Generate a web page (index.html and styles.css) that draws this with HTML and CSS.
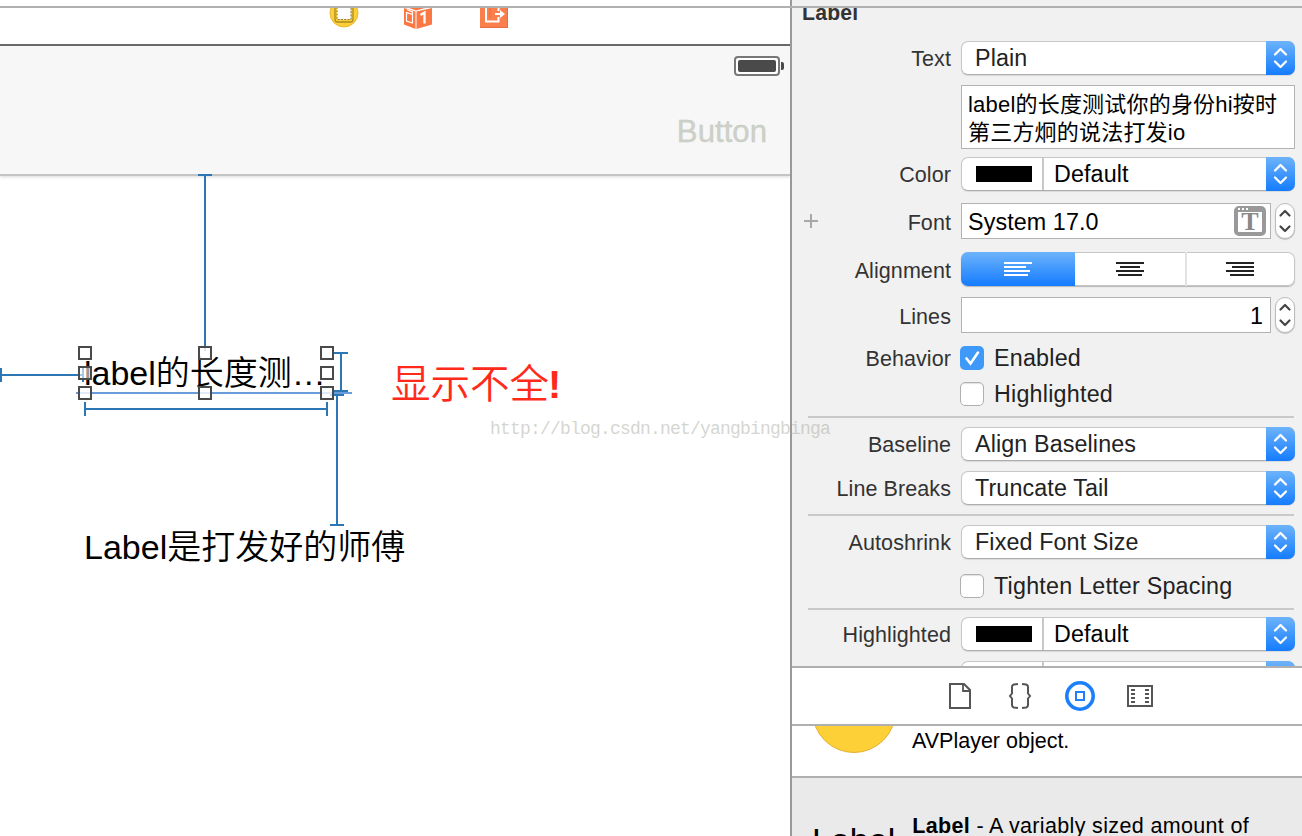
FILE: index.html
```
<!DOCTYPE html>
<html lang="zh-CN">

<head>
    <meta charset="UTF-8">
    <meta name="viewport" content="width=device-width, initial-scale=1.0">
    <title>Label</title>
    <link rel="stylesheet" href="styles.css">
</head>

<body>
    <!-- shared symbols -->
    <svg class="defs">
        <symbol id="updown" viewBox="0 0 29 34">
            <path d="M9 13.500l5.500-5.500 5.500 5.500M9 20.500l5.500 5.500 5.500-5.500" fill="none" stroke="#fff" stroke-width="2.300" stroke-linecap="round" stroke-linejoin="round" />
        </symbol>
        <symbol id="stepper" viewBox="0 0 20 36">
            <path d="M5.500 12.500l4.500-4.500 4.500 4.500M5.500 23.500l4.500 4.500 4.500-4.500" fill="none" stroke="#444" stroke-width="2.200" stroke-linecap="round" stroke-linejoin="round" />
        </symbol>
    </svg>

    <div class="topbar"></div>

    <div class="container">
        <!-- Interface Builder canvas -->
        <div class="editor">
            <div class="dock">
                <svg width="30" height="20" viewBox="0 8 30 20">
                    <circle cx="15" cy="13" r="14" fill="#fdd037" stroke="#e9b637" />
                    <rect x="6" y="2" width="18" height="20" rx="2.500" fill="#fdd037" stroke="#a98a26" stroke-width="1.300" />
                    <rect x="8" y="2" width="14" height="17.500" fill="#fff" stroke="#8b7428" stroke-dasharray="2 1.300" />
                </svg>
                <svg width="28" height="21" viewBox="0 8 28 21">
                    <path d="M0 8l11.500 3.500V29L0 24.500z" fill="#fb7744" />
                    <path d="M12.500 11.500L28 8v16.500L12.500 29z" fill="#fb7744" />
                    <path d="M5 8h16l-9 2.500z" fill="#fb7744" />
                    <path d="M2.500 12.500l6 2v8.500l-6-2zM3 9.500l5.500 2.500v2" fill="none" stroke="#fff" stroke-width="1.200" />
                    <path d="M16.500 15l4-2.500V23.500" fill="none" stroke="#fff" stroke-width="2.300" />
                </svg>
                <svg width="28" height="20" viewBox="0 8 28 20">
                    <rect width="28" height="28" fill="#fb7f4d" />
                    <path d="M27.500 0v27.500H0" fill="none" stroke="#e76e42" />
                    <path d="M6 8v13.500h12.500v-4.500M18.500 8v3" fill="none" stroke="#fff" stroke-width="2" />
                    <path d="M10 8v10" stroke="#e76e42" />
                    <path d="M15 14h8" stroke="#fff" stroke-width="2" />
                    <path d="M20 10l5 4-5 4z" fill="#fff" />
                </svg>
            </div>

            <div class="navbar">
                <div class="battery"><span></span></div>
                <div class="nav-button">Button</div>
            </div>

            <div class="ui-label selected-label">label的长度测…</div>
            <div class="ui-label second-label">Label是打发好的师傅</div>
            <svg class="constraints" width="790" height="836" viewBox="0 0 790 836">
                <g fill="none" stroke="#2d76b5" stroke-width="2">
                    <path d="M198 175h14M205 175v176" />
                    <path d="M1 368v14M1 375h82M83 367v15" />
                    <path d="M334 353h14M341 353v38M334 391h14" />
                    <path d="M85 402v14M327 402v14M85 409h242" />
                    <path d="M330 395h14M337 395v130M330 525h14" />
                </g>
                <path d="M76 393h276" stroke="#699cda" stroke-width="2" />
                <g fill="#fff" fill-opacity=".8" stroke="#4a4a4a" stroke-width="2">
                    <rect x="79" y="347" width="12" height="12" />
                    <rect x="199" y="347" width="12" height="12" />
                    <rect x="321" y="347" width="12" height="12" />
                    <rect x="79" y="367" width="12" height="12" fill-opacity=".6" />
                    <rect x="321" y="367" width="12" height="12" />
                    <rect x="79" y="387" width="12" height="12" />
                    <rect x="199" y="387" width="12" height="12" />
                    <rect x="321" y="387" width="12" height="12" />
                </g>
            </svg>
            <div class="note">显示不全<b>!</b></div>
        </div>

        <div class="sidebar">
            <!-- attributes inspector -->
            <div class="inspector">
                <h2>Label</h2>

                <div class="row">
                    <div class="name">Text</div>
                    <div class="popup"><span>Plain</span><i><svg><use href="#updown" /></svg></i></div>
                </div>
                <div class="row gap-10">
                    <div class="name"></div>
                    <div class="textarea">label的长度测试你的身份hi按时<br>第三方炯的说法打发io</div>
                </div>
                <div class="row gap-8">
                    <div class="name">Color</div>
                    <div class="popup color"><b></b><span>Default</span><i><svg><use href="#updown" /></svg></i></div>
                </div>
                <div class="row gap-12">
                    <div class="name low with-plus">
                        <svg width="14" height="14"><path d="M7 0v14M0 7h14" stroke="#a8a8a8" stroke-width="2" /></svg>
                        Font
                    </div>
                    <div class="field-group">
                        <div class="field">
                            System 17.0
                            <span class="font-icon">T</span>
                        </div>
                        <div class="stepper"><svg><use href="#stepper" /></svg></div>
                    </div>
                </div>
                <div class="row gap-13">
                    <div class="name low">Alignment</div>
                    <div class="segments">
                        <div class="active"><svg width="28" height="14"><path d="M0 1h28M0 5h22M0 9h26M0 13h24" /></svg></div>
                        <div><svg width="28" height="14"><path d="M0 1h28M4 5h20M0 9h28M2 13h24" /></svg></div>
                        <div><svg width="28" height="14"><path d="M0 1h28M6 5h22M0 9h28M4 13h24" /></svg></div>
                    </div>
                </div>
                <div class="row gap-11">
                    <div class="name low">Lines</div>
                    <div class="field-group">
                        <div class="field number">1</div>
                        <div class="stepper"><svg><use href="#stepper" /></svg></div>
                    </div>
                </div>
                <div class="row gap-13">
                    <div class="name">Behavior</div>
                    <div class="check checked">
                        <i><svg width="24" height="24"><path d="M6.500 12.500l4 5 7.500-11" fill="none" stroke="#fff" stroke-width="2.600" stroke-linecap="round" /></svg></i>
                        Enabled
                    </div>
                </div>
                <div class="row gap-12">
                    <div class="name"></div>
                    <div class="check"><i></i>Highlighted</div>
                </div>

                <div class="divider gap-10"></div>

                <div class="row gap-9">
                    <div class="name">Baseline</div>
                    <div class="popup"><span>Align Baselines</span><i><svg><use href="#updown" /></svg></i></div>
                </div>
                <div class="row gap-10">
                    <div class="name">Line Breaks</div>
                    <div class="popup"><span>Truncate Tail</span><i><svg><use href="#updown" /></svg></i></div>
                </div>

                <div class="divider gap-9"></div>

                <div class="row gap-9">
                    <div class="name">Autoshrink</div>
                    <div class="popup"><span>Fixed Font Size</span><i><svg><use href="#updown" /></svg></i></div>
                </div>
                <div class="row gap-15">
                    <div class="name"></div>
                    <div class="check"><i></i>Tighten Letter Spacing</div>
                </div>

                <div class="divider gap-10"></div>

                <div class="row gap-7">
                    <div class="name">Highlighted</div>
                    <div class="popup color"><b></b><span>Default</span><i><svg><use href="#updown" /></svg></i></div>
                </div>
                <div class="row gap-10">
                    <div class="name"></div>
                    <div class="popup color"><b></b><span></span><i></i></div>
                </div>
            </div>

            <!-- library tabs -->
            <div class="tabs">
                <svg width="30" height="30" viewBox="0 0 30 30" fill="none" stroke="#555" stroke-width="2">
                    <path d="M5 3h14l6 6v18H5z" />
                    <path d="M18 4v6h6" stroke-width="1.800" />
                </svg>
                <svg width="30" height="30" viewBox="0 0 30 30" fill="none" stroke="#555" stroke-width="2">
                    <path d="M13 3l-4 .5q-2 .5-2 2.500v6.500L5 15l2 2.500V24q0 2 2 2.500l4 .5M17 3l4 .5q2 .5 2 2.500v6.500l2 2.500-2 2.500V24q0 2-2 2.500l-4 .5" />
                </svg>
                <svg width="30" height="30" viewBox="0 0 30 30" fill="none" stroke="#1d80fb">
                    <circle cx="15" cy="15" r="13.200" stroke-width="3.600" />
                    <path d="M11 11h8v8h-8z" stroke-width="2" />
                </svg>
                <svg width="30" height="30" viewBox="0 0 30 30" fill="none" stroke="#555" stroke-width="2">
                    <path d="M3 5h24v20H3z" />
                    <path d="M6 9h4M6 13h4M6 17h4M6 21h4M20 9h4M20 13h4M20 17h4M20 21h4" />
                </svg>
            </div>

            <!-- object library -->
            <div class="library-item player">
                <div class="circle"></div>
                <p>AVPlayer object.</p>
            </div>
            <div class="library-item selected">
                <div class="preview">Label</div>
                <p><strong>Label</strong> - A variably sized amount of</p>
            </div>
        </div>
    </div>

    <div class="watermark">http://blog.csdn.net/yangbingbinga</div>
</body>

</html>
```
FILE: styles.css
```
:root {
    --panel-color: #f1f1f1;
    --line-color: #b0b0b0;
    --blue-gradient: linear-gradient(#6db3fa, #147cff);
}

* {
    box-sizing: border-box;
}

body {
    margin: 0;
    width: 1302px;
    height: 836px;
    position: relative;
    overflow: hidden;
    background: #fff;
    color: #000;
    font-family: "Liberation Sans", "Noto Sans CJK SC", sans-serif;
}

svg {
    display: block;
    flex: none;
}

.defs {
    position: absolute;
    width: 0;
    height: 0;
}

/* the line across the window top, over both panes */
.topbar {
    position: absolute;
    top: 6px;
    left: 0;
    width: 100%;
    height: 2px;
    background: var(--line-color);
    z-index: 1;
}

.container {
    display: flex;
    height: 836px;
}

/* Canvas */
.editor {
    position: relative;
    width: 790px;
    flex: none;
    overflow: hidden;
}

.dock {
    display: flex;
    gap: 46px;
    height: 46px;
    padding: 8px 0 0 329px;
    border-bottom: 2px solid #6b6b6b;
}

.dock svg + svg {
    margin-left: -1px;
}

.dock svg:last-child {
    margin-left: 2px;
}

.navbar {
    display: flex;
    flex-direction: column;
    align-items: flex-end;
    height: 130px;
    background: #f7f7f7;
    border-bottom: 2px solid #c4c4c4;
    box-shadow: 0 1px 3px rgba(0, 0, 0, 0.15);
}

.battery {
    position: relative;
    width: 46px;
    height: 20px;
    margin: 10px 10px 0 0;
    padding: 2px;
    border: 2px solid #777;
    border-radius: 4px;
    background: #fff;
}

.battery span {
    display: block;
    height: 12px;
    border-radius: 2px;
    background: #4a4a4a;
}

.battery::after {
    content: "";
    position: absolute;
    left: 45px;
    top: 4px;
    width: 3px;
    height: 8px;
    border-radius: 0 2px 2px 0;
    background: #4a4a4a;
}

.nav-button {
    margin: 37px 23px 0 0;
    font-size: 31.200px;
    line-height: 37px;
    color: #cdd1c7;
    -webkit-text-stroke: 0.300px #c4c7c0;
}

.ui-label {
    position: absolute;
    left: 84px;
    font-size: 34px;
    font-weight: 350;
    line-height: 40px;
    white-space: nowrap;
}

.selected-label {
    top: 353px;
}

.second-label {
    top: 527px;
}

.constraints {
    position: absolute;
    top: 0;
    left: 0;
}

.note {
    position: absolute;
    left: 391px;
    top: 357px;
    font-family: "Noto Sans CJK SC", sans-serif;
    font-size: 39.500px;
    font-weight: 350;
    line-height: 48px;
    color: #ff2a1a;
}

.note b {
    margin-left: -1px;
    font-family: "Liberation Sans", sans-serif;
}

.watermark {
    position: absolute;
    left: 490px;
    top: 419px;
    font-family: "Liberation Mono", monospace;
    font-size: 18px;
    line-height: 20px;
    letter-spacing: -0.800px;
    color: rgba(170, 172, 160, 0.5);
}

/* Right pane */
.sidebar {
    display: flex;
    flex-direction: column;
    width: 512px;
    border-left: 2px solid #999;
}

.inspector {
    height: 668px;
    flex: none;
    padding-top: 8px;
    overflow: hidden;
    background: var(--panel-color);
    border-bottom: 2px solid var(--line-color);
}

/* scrolled half out of view */
.inspector h2 {
    margin: 0;
    padding-left: 10px;
    height: 33px;
    overflow: hidden;
    font-size: 21.200px;
    line-height: 10px;
    letter-spacing: 0.200px;
    color: #333;
}

.row {
    display: grid;
    grid-template-columns: 159px 334px;
    column-gap: 10px;
    align-items: center;
}

.gap-7 { margin-top: 7px; }
.gap-8 { margin-top: 8px; }
.gap-9 { margin-top: 9px; }
.gap-10 { margin-top: 10px; }
.gap-11 { margin-top: 11px; }
.gap-12 { margin-top: 12px; }
.gap-13 { margin-top: 13px; }
.gap-15 { margin-top: 15px; }

.name {
    padding-top: 2px;
    text-align: right;
    font-size: 21.500px;
    line-height: 22px;
    letter-spacing: 0.080px;
    color: #333;
}

.low {
    padding-top: 4px;
}

.with-plus {
    display: flex;
    justify-content: space-between;
    align-items: center;
    padding-left: 12px;
}

.with-plus svg {
    margin-top: -4px;
}

.popup {
    display: flex;
    align-items: center;
    height: 34px;
    background: #fff;
    border: 1px solid #c6c6c6;
    border-bottom-color: #adadad;
    border-radius: 7px;
    box-shadow: 0 1px 1px rgba(0, 0, 0, 0.1);
    font-size: 23.300px;
    letter-spacing: 0.120px;
    color: #222;
}

.popup span {
    flex: 1;
    padding-left: 13px;
}

.popup i {
    width: 29px;
    height: 34px;
    margin: -1px;
    border-radius: 0 7px 7px 0;
    background: var(--blue-gradient);
}

.popup svg {
    width: 29px;
    height: 34px;
}

.popup b {
    width: 56px;
    height: 16px;
    margin: 0 10px 0 14px;
    background: #000;
}

.popup.color {
    color: #000;
}

.color span {
    height: 32px;
    padding-left: 10px;
    line-height: 33px;
    border-left: 2px solid #c9c9c9;
}

.textarea {
    height: 64px;
    padding: 5px 0 0 6px;
    background: #fff;
    border: 1px solid #b3b3b3;
    font-size: 22px;
    line-height: 28px;
    letter-spacing: 0.200px;
    white-space: nowrap;
}

.field-group {
    display: flex;
    justify-content: space-between;
}

.field {
    display: flex;
    align-items: center;
    justify-content: space-between;
    width: 310px;
    height: 36px;
    padding: 2px 4px 0 6px;
    background: #fff;
    border: 1px solid #b3b3b3;
    font-size: 23.300px;
    letter-spacing: 0.100px;
}

.number {
    justify-content: flex-end;
    padding-right: 7px;
}

.font-icon {
    width: 32px;
    height: 30px;
    margin-top: -2px;
    border: 4px solid #999;
    border-top-width: 6px;
    border-radius: 5px;
    text-align: center;
    font-family: "Liberation Serif", serif;
    font-size: 26px;
    font-weight: bold;
    line-height: 20px;
    letter-spacing: 0;
    color: #888;
    position: relative;
}

/* window dots on the title strip of the font icon */
.font-icon::before {
    content: "";
    position: absolute;
    left: 0;
    top: -4px;
    width: 10px;
    height: 2px;
    background: repeating-linear-gradient(90deg, #fff 0 2px, #999 2px 4px);
}

.stepper {
    width: 20px;
    height: 36px;
    border: 1px solid #bbb;
    border-radius: 10px;
    background: #fff;
    box-shadow: 0 1px 1px rgba(0, 0, 0, 0.2);
}

.stepper svg {
    width: 20px;
    height: 36px;
    margin: -1px;
}

.segments {
    display: grid;
    grid-template-columns: 114px 110px 110px;
    height: 34px;
    border-radius: 7px;
    background: #fff;
    overflow: hidden;
    box-shadow: inset 0 0 0 1px #c6c6c6, 0 1px 1px rgba(0, 0, 0, 0.25);
}

.segments div {
    display: flex;
    align-items: center;
    justify-content: center;
}

.segments div + div + div {
    padding-right: 2px;
    border-left: 2px solid #e2e2e2;
}

.segments .active {
    padding-right: 1px;
    background: var(--blue-gradient);
}

.segments path {
    stroke: #222;
    stroke-width: 2;
}

.segments .active path {
    stroke: #fff;
}

.check {
    display: flex;
    align-items: center;
    gap: 10px;
    height: 24px;
    margin-left: -1px;
    font-size: 23.300px;
    letter-spacing: 0.220px;
    color: #222;
    white-space: nowrap;
}

.check i {
    width: 24px;
    height: 24px;
    background: #fff;
    border: 1px solid #b0b0b0;
    border-radius: 5px;
    box-shadow: inset 0 1px 1px rgba(0, 0, 0, 0.12);
}

.checked i {
    background: #3f99f8;
    border: none;
    box-shadow: none;
}

.divider {
    height: 2px;
    margin-left: 16px;
    margin-right: 8px;
    background: #c9c9c9;
}

/* Library */
.tabs {
    display: flex;
    justify-content: center;
    align-items: center;
    gap: 30px;
    height: 58px;
    flex: none;
    padding-left: 6px;
    border-bottom: 2px solid var(--line-color);
    background: #fff;
}

.library-item {
    display: flex;
    flex: none;
    overflow: hidden;
    font-size: 21.500px;
    line-height: 24px;
    white-space: nowrap;
}

.library-item p {
    margin: 0;
}

.player {
    align-items: flex-end;
    gap: 16px;
    height: 52px;
    padding: 0 0 23px 20px;
    border-bottom: 2px solid var(--line-color);
    background: #fff;
}

.circle {
    width: 84px;
    height: 84px;
    flex: none;
    border: 1px solid #e6ae30;
    border-radius: 50%;
    background: #fdd037;
}

.selected {
    gap: 17px;
    height: 58px;
    padding: 36px 0 0 20px;
    background: #eaeaea;
}

.selected p {
    letter-spacing: 0.350px;
}

.preview {
    padding-top: 6px;
    font-size: 34px;
    line-height: 40px;
}
```
